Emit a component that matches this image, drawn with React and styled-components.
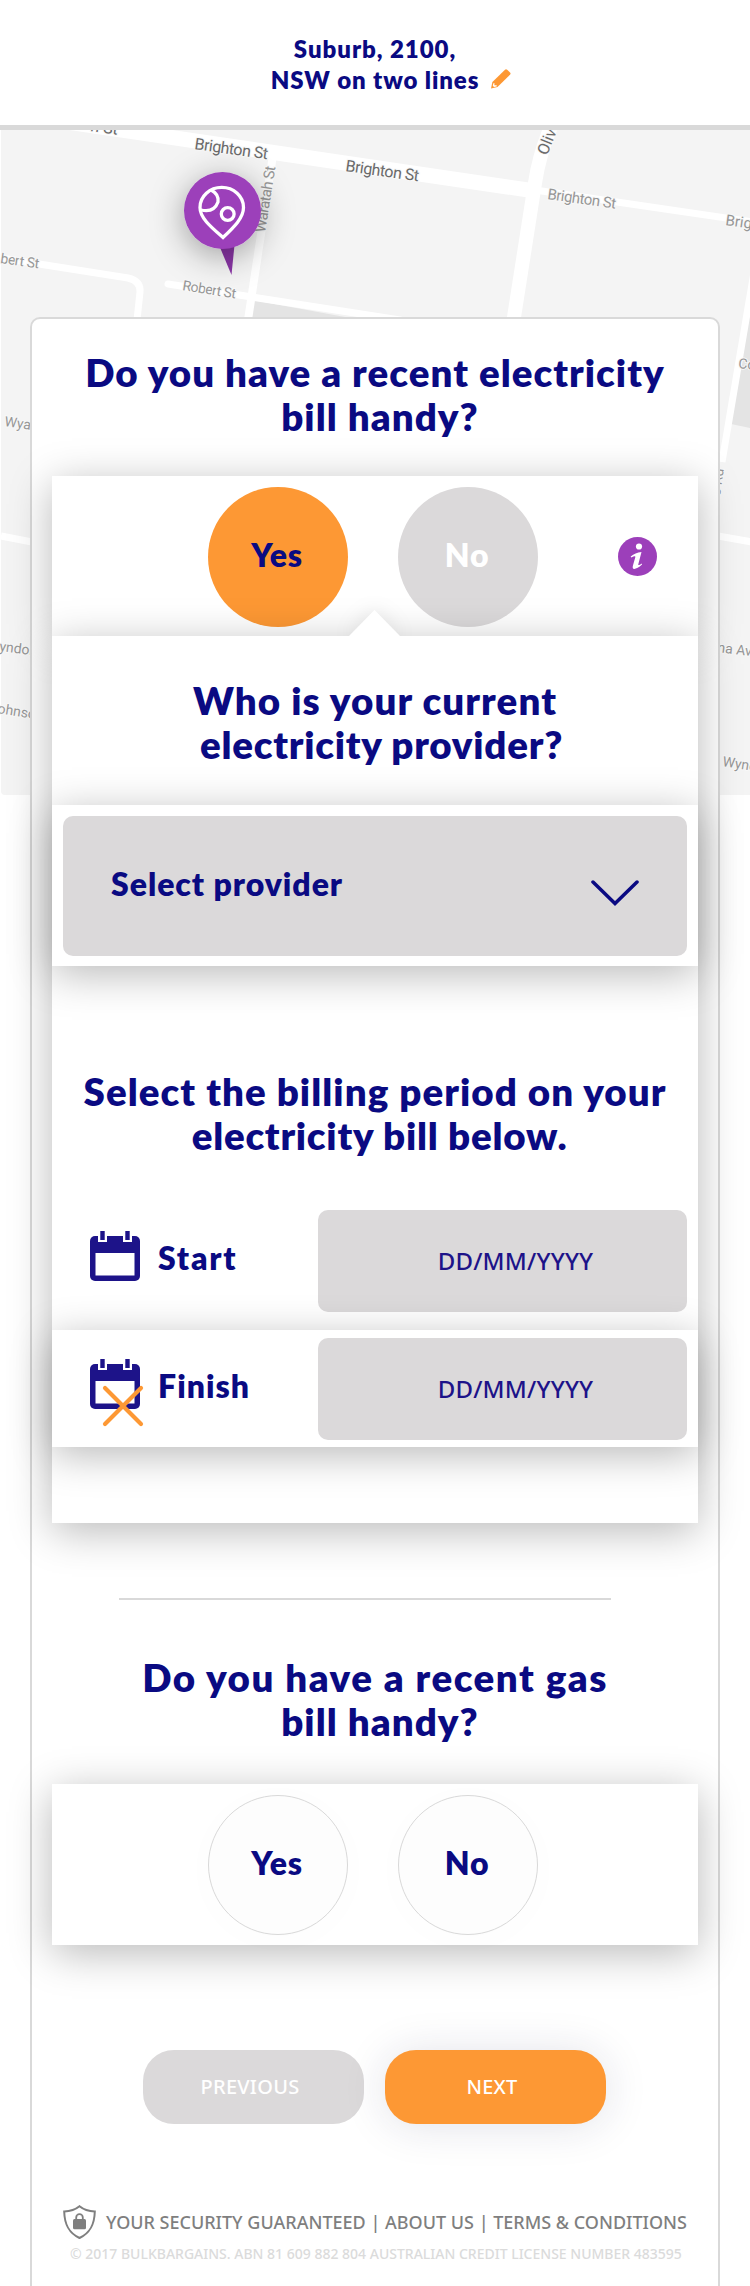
import React from "react";
import styled, { createGlobalStyle } from "styled-components";

const navy = "#0a0a82";
const indigo = "#1d1389";
const orange = "#fd9834";
const grey = "#dbd9da";
const line = "#d9d9d9";
const purple = "#9c3fba";
const rounded = `Lato, "Open Sans", sans-serif`;
const plain = `"Noto Sans", "Open Sans", sans-serif`;
const lift = "0 8px 40px rgba(0, 0, 0, 0.28)";

const GlobalStyle = createGlobalStyle`
  * { box-sizing: border-box; }
  body { margin: 0; background: #fff; }
  button { border: 0; padding: 0; margin: 0; cursor: pointer; }
`;

const Page = styled.main`
  position: relative;
  width: 750px;
  height: 2286px;
  overflow: hidden;
  background: #fff;
  display: flex;
  flex-direction: column;
`;

const Header = styled.header`
  flex: none;
  height: 130px;
  padding-top: 33px;
  border-bottom: 5px solid ${line};
  display: flex;
  flex-direction: column;
  align-items: center;
  color: ${navy};
  font: 800 24px/31px ${rounded};
`;

const HeaderLine = styled.div`
  position: relative;
  white-space: nowrap;
  letter-spacing: ${(p) => p.$track}px;
`;

const Pencil = styled.svg`
  position: absolute;
  left: calc(100% + 12px);
  top: 5px;
`;

const MapLayer = styled.svg`
  position: absolute;
  left: 0;
  top: 130px;
  text {
    font-family: Roboto, sans-serif;
    paint-order: stroke;
    stroke: #f8f8f8;
    stroke-width: 2px;
  }
`;

const Card = styled.section`
  position: relative;
  flex: none;
  width: 690px;
  height: 1990px;
  margin: 187px 0 0 30px;
  padding: 31px 20px 0;
  border: 2px solid ${line};
  border-radius: 10px;
  background: #fff;
  display: flex;
  flex-direction: column;
`;

const Heading = styled.h2`
  margin: 0;
  padding: ${(p) => p.$pad || "0"};
  color: ${navy};
  font: 800 38.5px/44px ${rounded};
  text-align: center;
  white-space: pre;
`;

const HeadingLine = styled.span`
  display: block;
  letter-spacing: ${(p) => p.$track}px;
  padding-left: ${(p) => p.$indent || 0}px;
`;

const Panel = styled.div`
  position: relative;
  flex: none;
  width: 646px;
  background: #fff;
  box-shadow: ${lift};
`;

const ChoicePanel = styled(Panel)`
  height: ${(p) => p.$height}px;
  padding: 11px 0 0 156px;
  display: flex;
  gap: 50px;
`;

const Choice = styled.button`
  width: 140px;
  height: 140px;
  padding: 0 2px 5px 0;
  border-radius: 50%;
  border: ${(p) => (p.$tone === "outline" ? `1px solid ${line}` : "0")};
  background: ${(p) => ({ active: orange, muted: grey, outline: "#fdfdfd" })[p.$tone]};
  color: ${(p) => (p.$tone === "muted" ? "#fff" : navy)};
  box-shadow: ${(p) => (p.$tone === "outline" ? "0 4px 40px rgba(0,0,0,0.015)" : "none")};
  font: 800 32px/40px ${rounded};
  letter-spacing: 0.8px;
`;

const Info = styled.svg`
  margin: 50px 0 0 30px;
`;

const Notch = styled.svg`
  position: absolute;
  left: 258px;
  top: -60px;
`;

const ProviderPanel = styled(Panel)`
  height: 887px;
  padding-top: 42px;
`;

const SelectRow = styled(Panel)`
  height: 161px;
  margin-top: 39px;
  padding: 11px 11px 10px;
`;

const Select = styled.button`
  width: 100%;
  height: 140px;
  padding: 0 48px 4px;
  border-radius: 10px;
  background: ${grey};
  color: ${navy};
  display: flex;
  align-items: center;
  justify-content: space-between;
  font: 800 32px/40px ${rounded};
  letter-spacing: ${(p) => p.$track}px;
`;

const Chevron = styled.svg`
  margin-top: 18px;
`;

const DateRow = styled.div`
  position: relative;
  height: 117px;
  margin-top: ${(p) => p.$gap}px;
  padding: 8px 11px 7px 38px;
  background: #fff;
  box-shadow: ${(p) => (p.$raised ? lift : "none")};
  display: flex;
`;

const DateLabel = styled.label`
  width: 228px;
  padding-top: 21px;
  display: flex;
  gap: 18px;
  color: ${navy};
  font: 800 32px/54px ${rounded};
  letter-spacing: ${(p) => p.$track}px;
`;

const CalendarIcon = styled.svg`
  flex: none;
  overflow: visible;
`;

const DateField = styled.div`
  width: 369px;
  height: 102px;
  padding: 0 0 0 26px;
  border-radius: 10px;
  background: ${grey};
  color: ${indigo};
  display: flex;
  align-items: center;
  justify-content: center;
  font: 500 24px/32px ${plain};
  letter-spacing: 0.2px;
`;

const Divider = styled.hr`
  flex: none;
  width: 492px;
  height: 2px;
  margin: 75px 0 0 67px;
  border: 0;
  background: ${line};
`;

const Actions = styled.div`
  display: flex;
  gap: 21px;
  margin: 105px 0 0 91px;
`;

const Action = styled.button`
  width: 221px;
  height: 74px;
  padding-right: 7px;
  border-radius: 31px;
  background: ${(p) => (p.$primary ? orange : grey)};
  box-shadow: ${(p) => (p.$primary ? "0 2px 44px rgba(30, 30, 80, 0.13)" : "none")};
  color: #fff;
  font: 500 20px/28px ${plain};
  letter-spacing: 0.25px;
`;

const Footer = styled.footer`
  margin-top: 81px;
  padding-left: 11px;
  white-space: nowrap;
`;

const FooterLinks = styled.div`
  display: flex;
  gap: 10px;
  color: #7f7f7f;
  font: 500 18px/35px ${plain};
  height: 35px;
`;

const Legal = styled.p`
  margin: 4px 0 0 7px;
  color: #dbdbdb;
  font: 500 14px/20px ${plain};
`;

function StreetMap() {
  return (
    <MapLayer width="750" height="665" viewBox="0 130 750 665">
      <defs>
        <filter id="pinShadow" x="-100%" y="-100%" width="300%" height="300%">
          <feDropShadow dx="0" dy="7" stdDeviation="17" floodOpacity="0.36" />
        </filter>
      </defs>
      <path d="M1 130H750V795H5Q1 795 1 791Z" fill="#f4f4f4" />
      <path d="M253 300L356 319H250ZM752 295L731 424L750 428Z" fill="#e4e4e4" />
      <g fill="none" stroke="#fff">
        <path d="M60 121L535 191" strokeWidth="15" />
        <path d="M535 190L760 223" strokeWidth="7" />
        <path d="M554 120Q540 150 535 183L512 330" strokeWidth="14" />
        <path d="M273 155L248 320" strokeWidth="8" />
        <path d="M1 258L128 278Q141 281 140 292L137 320" strokeWidth="7" />
        <path d="M168 284L400 320" strokeWidth="7" strokeLinecap="round" />
        <path d="M754 272L722 462M1 536L32 542M718 536L752 542" strokeWidth="7" />
      </g>
      <g fontSize="16" fill="#6a6a6a">
        <text transform="translate(194 149) rotate(8)" textLength="74">Brighton St</text>
        <text transform="translate(345 171) rotate(8)" textLength="74">Brighton St</text>
        <text transform="translate(90 131) rotate(8)">n St</text>
        <text transform="translate(547 156) rotate(-68)">Olivet</text>
      </g>
      <g fontSize="15" fill="#969696">
        <text transform="translate(547 199) rotate(8)" textLength="69">Brighton St</text>
        <text transform="translate(725 225) rotate(8)">Brighton</text>
        <text transform="translate(265 233) rotate(-81)" textLength="67">Waratah St</text>
      </g>
      <g fontSize="14" fill="#969696">
        <text transform="translate(0 263) rotate(8)" textLength="39">bert St</text>
        <text transform="translate(182 290) rotate(9)" textLength="54">Robert St</text>
        <text transform="translate(4 426) rotate(8)">Wyatt</text>
        <text transform="translate(-1 651) rotate(7)">yndora</text>
        <text transform="translate(-3 713) rotate(9)">ohnson</text>
        <text transform="translate(738 368) rotate(6)">Cook</text>
        <text transform="translate(717 652) rotate(7)">na Ave</text>
        <text transform="translate(722 766) rotate(9)">Wyndora</text>
        <text transform="translate(720 496) rotate(-82)">s Rd</text>
      </g>
      <path d="M219 245H234.500L231.500 275Z" fill="#8a35a6" />
      <circle cx="222.500" cy="210.500" r="38.500" fill={purple} filter="url(#pinShadow)" />
      <g fill="none" stroke="#fff" strokeWidth="3.300">
        <path d="M223 237.500C211 227 200 218 200 207.500A21.700 20 0 0 1 243.500 207.500C243.500 218 234 227 223 237.500Z" />
        <path d="M211 190Q219 194 218 202Q214 213 201 210" />
        <circle cx="227.700" cy="214" r="6.400" />
      </g>
    </MapLayer>
  );
}

function Calendar({ ended }) {
  return (
    <CalendarIcon width="50" height="50" viewBox="0 0 50 50">
      <rect y="5" width="50" height="45" rx="5" fill={indigo} />
      <rect x="5.500" y="22" width="39" height="22.500" fill="#fff" />
      <path d="M8 3H17V11H8ZM33 3H42V11H33Z" fill="#fff" />
      <path d="M10.300 0H14.700V9H10.300ZM35.300 0H39.700V9H35.300Z" fill={indigo} />
      {ended && (
        <path d="M15 29L51 65M51 29L15 65" stroke={orange} strokeWidth="4.200" strokeLinecap="round" />
      )}
    </CalendarIcon>
  );
}

function ShieldIcon() {
  return (
    <svg width="33" height="35" viewBox="0 0 33 35">
      <path
        d="M16.500 1.200Q10.500 6 1.200 6.500C1.500 20 6 28 16.500 33C27 28 31.500 20 31.800 6.500Q22.500 6 16.500 1.200Z"
        fill="none"
        stroke="#7f7f7f"
        strokeWidth="2"
      />
      <rect x="10" y="14" width="13" height="10.300" rx="1.500" fill="#7f7f7f" />
      <path d="M13.200 15V12.500A3.300 3.300 0 0 1 19.800 12.500V15" fill="none" stroke="#7f7f7f" strokeWidth="1.800" />
    </svg>
  );
}

export default function App() {
  return (
    <>
      <GlobalStyle />
      <Page>
        <StreetMap />
        <Header>
          <HeaderLine $track={0.95}>Suburb, 2100,</HeaderLine>
          <HeaderLine $track={0.9}>
            NSW on two lines
            <Pencil width="20" height="20" viewBox="0 0 20 20" fill={orange}>
              <path d="M14 .7Q15 -.2 16.200 .8L19 3.400Q20 4.400 19.200 5.500L6.500 18L0 19.500L1.400 13Z" />
              <path d="M2.400 14.200L3.400 14V16.300H5.800L5.600 17.400L3 18L1.800 16.800Z" fill="#fff" />
            </Pencil>
          </HeaderLine>
        </Header>

        <Card>
          <Heading $pad="0 0 38px">
            <HeadingLine $track={1.03}>Do you have a recent electricity</HeadingLine>
            <HeadingLine $track={1.05} $indent={10}>bill handy?</HeadingLine>
          </Heading>
          <ChoicePanel $height={160}>
            <Choice $tone="active">Yes</Choice>
            <Choice $tone="muted">No</Choice>
            <Info width="39" height="39" viewBox="0 0 39 39">
              <circle cx="19.500" cy="19.500" r="19.500" fill={purple} />
              <circle cx="21" cy="9.500" r="3.100" fill="#fff" />
              <path
                d="M12.700 19.600C16 17 19 15.200 23.500 15L20.300 27.200C20 28.600 21 28.400 23.800 26.600L24 27.600C21 30.500 18 32 16.300 32C14.600 32 14.400 30.400 15 28.300L17.300 20.200C17.700 18.700 16.500 18.800 13.200 20.600Z"
                fill="#fff"
              />
            </Info>
          </ChoicePanel>

          <ProviderPanel>
            <Notch width="130" height="60" viewBox="0 0 130 60">
              <path
                d="M39 60L64.500 34L90 60Z"
                fill="#fff"
                style={{ filter: "drop-shadow(0 0 10px rgba(0,0,0,0.1))" }}
              />
            </Notch>
            <Heading>
              <HeadingLine $track={1.1}>Who is your current</HeadingLine>
              <HeadingLine $track={0.75} $indent={13}>electricity provider?</HeadingLine>
            </Heading>
            <SelectRow>
              <Select $track={0.95}>
                Select provider
                <Chevron width="48" height="26" viewBox="0 0 48 26">
                  <path
                    d="M2 2L24 23.500L46 2"
                    fill="none"
                    stroke={navy}
                    strokeWidth="3.500"
                    strokeLinecap="round"
                  />
                </Chevron>
              </Select>
            </SelectRow>
            <Heading $pad="103px 0 45px">
              <HeadingLine $track={1.05}>Select the billing period on your</HeadingLine>
              <HeadingLine $track={0.75} $indent={9}>electricity bill below.</HeadingLine>
            </Heading>
            <DateRow $gap={0}>
              <DateLabel $track={1.8}>
                <Calendar />
                Start
              </DateLabel>
              <DateField>DD/MM/YYYY</DateField>
            </DateRow>
            <DateRow $gap={11} $raised>
              <DateLabel $track={1}>
                <Calendar ended />
                Finish
              </DateLabel>
              <DateField>DD/MM/YYYY</DateField>
            </DateRow>
          </ProviderPanel>

          <Divider />

          <Heading $pad="55px 0 41px">
            <HeadingLine $track={1.5}>Do you have a recent gas</HeadingLine>
            <HeadingLine $track={1.05} $indent={10}>bill handy?</HeadingLine>
          </Heading>
          <ChoicePanel $height={161}>
            <Choice $tone="outline">Yes</Choice>
            <Choice $tone="outline">No</Choice>
          </ChoicePanel>

          <Actions>
            <Action>PREVIOUS</Action>
            <Action $primary>NEXT</Action>
          </Actions>

          <Footer>
            <FooterLinks>
              <ShieldIcon />
              YOUR SECURITY GUARANTEED | ABOUT US | TERMS &amp; CONDITIONS
            </FooterLinks>
            <Legal>
              © 2017 BULKBARGAINS. ABN 81 609 882 804 AUSTRALIAN CREDIT LICENSE NUMBER 483595
            </Legal>
          </Footer>
        </Card>
      </Page>
    </>
  );
}
